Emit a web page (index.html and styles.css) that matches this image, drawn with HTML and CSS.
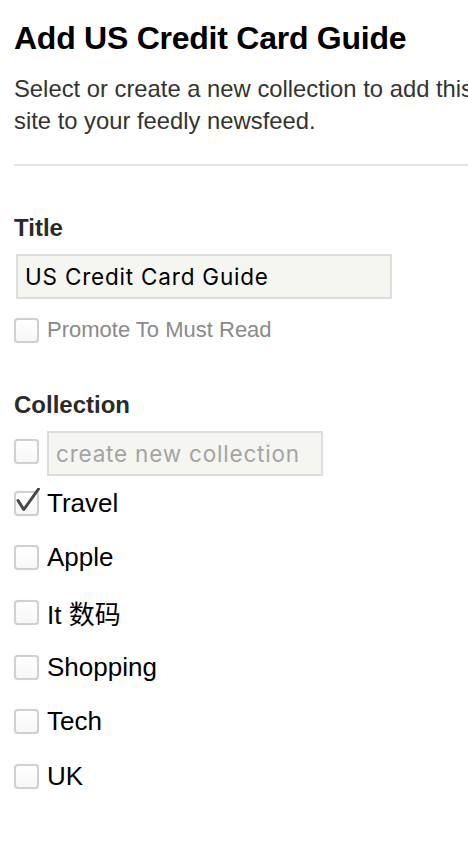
FILE: index.html
```html
<!DOCTYPE html>
<html lang="en">
<head>
  <meta charset="UTF-8" />
  <title>Add US Credit Card Guide</title>
  <link rel="stylesheet" href="styles.css">
</head>
<body>
  <div class="panel">
    <h1 class="heading">Add US Credit Card Guide</h1>
    <p class="intro">Select or create a new collection to add this site to your feedly newsfeed.</p>

    <hr class="divider">

    <div class="label">Title</div>
    <div class="field field-title">US Credit Card Guide</div>
    <div class="option muted">
      <span class="box"></span>
      <span>Promote To Must Read</span>
    </div>

    <div class="label">Collection</div>
    <div class="option new-row">
      <span class="box"></span>
      <div class="field field-new">create new collection</div>
    </div>

    <ul class="collections">
      <li class="option">
        <span class="box">
          <svg viewBox="0 0 26 26" width="26" height="26"><path d="M3 12.5 L8.8 21.5 L23.5 1" fill="none" stroke="#474747" stroke-width="3" stroke-linecap="round" stroke-linejoin="round"/></svg>
        </span>
        <span>Travel</span>
      </li>
      <li class="option"><span class="box"></span><span>Apple</span></li>
      <li class="option"><span class="box"></span><span>It 数码</span></li>
      <li class="option"><span class="box"></span><span>Shopping</span></li>
      <li class="option"><span class="box"></span><span>Tech</span></li>
      <li class="option"><span class="box"></span><span>UK</span></li>
    </ul>
  </div>
</body>
</html>
```

FILE: styles.css
```css
:root {
  --text: #2a2a2a;
  --muted: #8a8a8a;
  --placeholder: #a4a4a4;
  --line: #e4e4e4;
  --field-bg: #f5f5f1;
  --field-border: #dddddd;
  --box-border: #d0d0d0;
}

* {
  margin: 0;
  padding: 0;
  box-sizing: border-box;
}

html {
  overflow: hidden;
}

body {
  font-family: 'Liberation Sans', Arial, 'Noto Sans CJK SC', sans-serif;
  color: var(--text);
  background: #ffffff;
}

.panel {
  width: 520px;
  padding: 20px 0 0 14px;
}

.heading {
  font-size: 32px;
  font-weight: 700;
  line-height: 36px;
  color: #000000;
  letter-spacing: -0.25px;
}

.intro {
  max-width: 490px;
  margin-top: 17px;
  font-size: 23.8px;
  line-height: 32px;
  color: #333333;
}

.divider {
  border: 0;
  border-top: 2px solid var(--line);
  margin-top: 27px;
}

.label {
  margin-top: 48px;
  font-size: 24px;
  font-weight: 700;
  line-height: 28px;
}

.field {
  background: var(--field-bg);
  border: 2px solid var(--field-border);
  font-family: Inter, 'Liberation Sans', sans-serif;
  font-size: 22.5px;
  letter-spacing: 0.8px;
  line-height: 41px;
  padding: 0 7px;
}

.field-title {
  width: 376px;
  margin: 12px 0 0 2px;
  color: #000000;
}

.option {
  display: flex;
  align-items: center;
  gap: 8px;
  font-size: 26px;
  color: #000000;
}

.option.muted {
  margin-top: 18px;
  font-size: 22px;
  color: var(--muted);
}

.box {
  position: relative;
  flex: none;
  width: 25px;
  height: 25px;
  border: 2px solid var(--box-border);
  border-radius: 4px;
  background: linear-gradient(#ffffff, #f7f7f7);
  box-shadow: 0 0 1px rgba(0, 0, 0, 0.15);
}

.box svg {
  position: absolute;
  left: -1px;
  top: -5px;
}

.new-row {
  margin-top: 12px;
}

.new-row .box {
  margin-top: -4px;
}

.field-new {
  width: 276px;
  color: var(--placeholder);
}

.collections {
  list-style: none;
}

.collections .option {
  height: 54.6px;
}
```
